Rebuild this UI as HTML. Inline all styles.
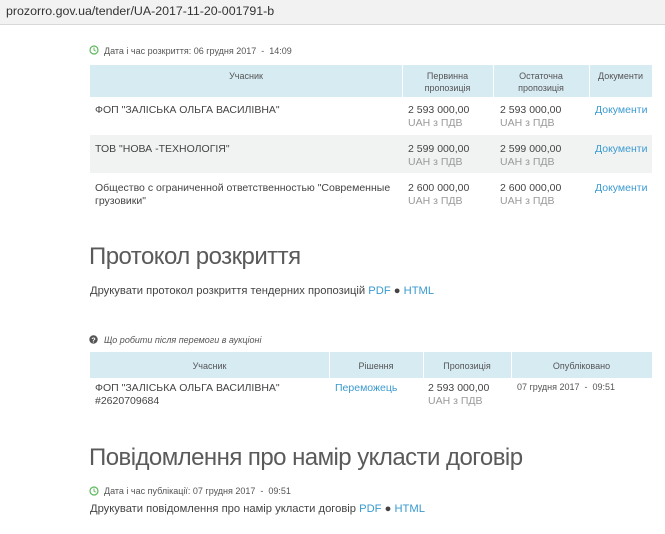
<!DOCTYPE html>
<html><head><meta charset="utf-8"><style>
*{margin:0;padding:0;box-sizing:border-box}
body{width:665px;height:534px;background:#fff;font-family:"Liberation Sans",sans-serif;color:#444;position:relative;overflow:hidden}
.bar{position:absolute;left:0;top:0;width:665px;height:25px;background:#f2f2f2;border-bottom:1px solid #d8d8d8}
.url{position:absolute;left:6px;top:4px;font-size:12.4px;color:#333}
.a{position:absolute;white-space:nowrap}
.s{font-size:9px;color:#555}
.t{font-size:10.5px;color:#444;line-height:13px}
.p{font-size:11.2px;color:#444}
.g{color:#999}
.l{color:#3a9ad0}
.h{font-size:24px;color:#5a5a5a;letter-spacing:-0.55px}
.hd{position:absolute;background:#d7ebf3}
.rg{position:absolute;background:#f1f3f3}
.vl{position:absolute;width:1px;background:#fff}
.c{text-align:center;font-size:9px;color:#555;line-height:12px}
</style></head><body>
<div class="bar"><div class="url">prozorro.gov.ua/tender/UA-2017-11-20-001791-b</div></div>

<svg class="a" style="left:89px;top:45px" width="10" height="10"><circle cx="5" cy="5" r="4" fill="none" stroke="#5cb85c" stroke-width="1.2"/><path d="M5 2.5V5l1.6 1.2" stroke="#5cb85c" fill="none" stroke-width="1"/></svg>
<div class="a s" style="left:104px;top:46px">Дата і час розкриття: 06 грудня 2017 &nbsp;- &nbsp;14:09</div>

<div class="hd" style="left:90px;top:65px;width:562px;height:32px"></div>
<div class="vl" style="left:402px;top:65px;height:32px"></div>
<div class="vl" style="left:493px;top:65px;height:32px"></div>
<div class="vl" style="left:589px;top:65px;height:32px"></div>
<div class="a c" style="left:90px;top:70px;width:312px">Учасник</div>
<div class="a c" style="left:402px;top:70px;width:91px">Первинна<br>пропозиція</div>
<div class="a c" style="left:493px;top:70px;width:96px">Остаточна<br>пропозиція</div>
<div class="a c" style="left:589px;top:70px;width:63px">Документи</div>

<div class="rg" style="left:90px;top:135px;width:562px;height:38px"></div>

<div class="a t" style="left:95px;top:104px">ФОП "ЗАЛІСЬКА ОЛЬГА ВАСИЛІВНА"</div>
<div class="a t" style="left:408px;top:104px">2 593 000,00<br><span class="g">UAH з ПДВ</span></div>
<div class="a t" style="left:500px;top:104px">2 593 000,00<br><span class="g">UAH з ПДВ</span></div>
<div class="a t l" style="left:595px;top:104px">Документи</div>

<div class="a t" style="left:95px;top:143px">ТОВ "НОВА -ТЕХНОЛОГІЯ"</div>
<div class="a t" style="left:408px;top:143px">2 599 000,00<br><span class="g">UAH з ПДВ</span></div>
<div class="a t" style="left:500px;top:143px">2 599 000,00<br><span class="g">UAH з ПДВ</span></div>
<div class="a t l" style="left:595px;top:143px">Документи</div>

<div class="a t" style="left:95px;top:182px">Общество с ограниченной ответственностью "Современные<br>грузовики"</div>
<div class="a t" style="left:408px;top:182px">2 600 000,00<br><span class="g">UAH з ПДВ</span></div>
<div class="a t" style="left:500px;top:182px">2 600 000,00<br><span class="g">UAH з ПДВ</span></div>
<div class="a t l" style="left:595px;top:182px">Документи</div>

<div class="a h" style="left:89px;top:243px">Протокол розкриття</div>
<div class="a p" style="left:90px;top:285px">Друкувати протокол розкриття тендерних пропозицій <span class="l">PDF</span> ● <span class="l">HTML</span></div>

<svg class="a" style="left:89px;top:335px" width="9" height="9"><circle cx="4.5" cy="4.5" r="4.2" fill="#555"/><text x="4.5" y="7.3" font-size="7" fill="#fff" text-anchor="middle" font-family="Liberation Sans" font-weight="bold">?</text></svg>
<div class="a s" style="left:104px;top:335px;font-style:italic">Що робити після перемоги в аукціоні</div>

<div class="hd" style="left:90px;top:352px;width:562px;height:26px"></div>
<div class="vl" style="left:329px;top:352px;height:26px"></div>
<div class="vl" style="left:423px;top:352px;height:26px"></div>
<div class="vl" style="left:511px;top:352px;height:26px"></div>
<div class="a c" style="left:90px;top:360px;width:239px">Учасник</div>
<div class="a c" style="left:329px;top:360px;width:94px">Рішення</div>
<div class="a c" style="left:423px;top:360px;width:88px">Пропозиція</div>
<div class="a c" style="left:511px;top:360px;width:141px">Опубліковано</div>

<div class="a t" style="left:95px;top:382px">ФОП "ЗАЛІСЬКА ОЛЬГА ВАСИЛІВНА"<br>#2620709684</div>
<div class="a t l" style="left:335px;top:382px">Переможець</div>
<div class="a t" style="left:428px;top:382px">2 593 000,00<br><span class="g">UAH з ПДВ</span></div>
<div class="a s" style="left:517px;top:382px">07 грудня 2017 &nbsp;- &nbsp;09:51</div>

<div class="a h" style="left:89px;top:444px">Повідомлення про намір укласти договір</div>
<svg class="a" style="left:89px;top:486px" width="10" height="10"><circle cx="5" cy="5" r="4" fill="none" stroke="#5cb85c" stroke-width="1.2"/><path d="M5 2.5V5l1.6 1.2" stroke="#5cb85c" fill="none" stroke-width="1"/></svg>
<div class="a s" style="left:104px;top:486px">Дата і час публікації: 07 грудня 2017 &nbsp;- &nbsp;09:51</div>
<div class="a p" style="left:90px;top:503px">Друкувати повідомлення про намір укласти договір <span class="l">PDF</span> ● <span class="l">HTML</span></div>
</body></html>
